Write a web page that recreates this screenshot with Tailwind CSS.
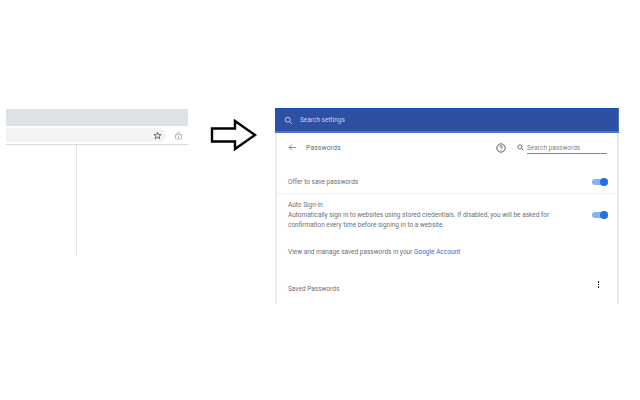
<!DOCTYPE html>
<html>
  <head>
    <meta charset="UTF-8" />
    <title>Passwords</title>
    <script src="https://cdn.jsdelivr.net/npm/@tailwindcss/browser@4"></script>
  </head>
  <body class="bg-white">
    <div class="w-[640px] h-[400px] flex items-start pt-[108px] overflow-hidden font-['Roboto',sans-serif] text-[6.5px] leading-[10px] text-[#6b6f74]">
      <!-- browser toolbar crop -->
      <div class="ml-[6px] w-[182px] mt-[1px] shrink-0">
        <div class="h-[17px] bg-[#dee1e6]"></div>
        <div class="h-[19px] pt-[2px] pb-[2px] flex items-center border-b border-[#d9d9d9]">
          <div class="w-[160px] h-[14px] bg-[#f1f3f4] rounded-r-full flex items-center justify-end pr-[4px]">
            <svg class="w-[9px] h-[9px]" viewBox="0 0 24 24" fill="#dcdee0" stroke="#55585d" stroke-width="2.200"><path d="M12 3l2.700 6.200 6.800.6-5.200 4.400 1.600 6.600L12 17.300l-5.900 3.500 1.600-6.600-5.200-4.400 6.800-.6z"/></svg>
          </div>
          <svg class="w-[9px] h-[9px] ml-[8px]" viewBox="0 0 24 24" fill="none" stroke="#9aa0a6" stroke-width="1.800"><path d="M4 10h16v11H4zM8 10V7a4 4 0 0 1 8 0v3"/><circle cx="12" cy="16" r="1.400" fill="#3c4043" stroke="none"/></svg>
        </div>
        <div class="ml-[70px] w-px h-[110px] bg-[#e3e3e3]"></div>
      </div>

      <svg class="ml-[22px] mt-[11px] w-[47px] h-[32px] shrink-0" viewBox="0 0 47 32" fill="none" stroke="#000" stroke-width="2.400"><path d="M2 9.500h23V2l20 14-20 14v-7.500H2z"/></svg>

      <!-- settings panel -->
      <div class="ml-[18px] w-[344px] h-[196px] shrink-0 flex flex-col">
        <div class="h-[25px] bg-[#2f4fa2] border-t border-t-[#0f4fc4] border-b-[2px] border-b-[#4a72dc] border-r border-r-[#3d73e0] flex items-center pl-[9px] text-[#c9d3ec]">
          <svg class="w-[9px] h-[9px]" viewBox="0 0 24 24" fill="none" stroke="#dfe5f5" stroke-width="2.200"><circle cx="10" cy="10" r="6.500"/><path d="M15 15l6 6"/></svg>
          <span class="ml-[7px]">Search settings</span>
        </div>
        <div class="flex-1 border-x-[2px] border-[#ebebeb] flex flex-col">
          <div class="h-[29px] flex items-center pl-[11px] pr-[10px]">
            <svg class="w-[9px] h-[9px]" viewBox="0 0 24 24" fill="none" stroke="#5f6368" stroke-width="2"><path d="M22 12H3M11 4l-8 8 8 8"/></svg>
            <span class="ml-[9px] text-[7px]">Passwords</span>
            <svg class="w-[10px] h-[10px] ml-auto" viewBox="0 0 24 24" fill="none" stroke="#3c4043" stroke-width="2"><circle cx="12" cy="12" r="10"/><path d="M9 9.500a3 3 0 1 1 4.500 2.600c-1 .6-1.500 1.200-1.500 2.400M12 16.500v2"/></svg>
            <svg class="w-[7px] h-[7px] ml-[11px]" viewBox="0 0 24 24" fill="none" stroke="#5f6368" stroke-width="3"><circle cx="10" cy="10" r="7"/><path d="M15 15l7 7"/></svg>
            <div class="ml-[3px] w-[80px] h-[13px] border-b border-[#80868b] flex items-center pt-[1px] text-[#80868b]">Search passwords</div>
          </div>
          <div class="mt-[8px] h-[24px] flex items-center justify-between px-[11px] pr-[9px] border-b border-[#f1f1f1]">
            <span>Offer to save passwords</span>
            <div class="relative w-[16px] h-[6px] rounded-full bg-[#8fb0ee]">
              <div class="absolute right-0 top-[-1px] w-[8px] h-[8px] rounded-full bg-[#1a73e8]"></div>
            </div>
          </div>
          <div class="mt-[6px] flex items-start justify-between pl-[11px] pr-[9px]">
            <div class="w-[276px]">
              <div>Auto Sign-in</div>
              <div>Automatically sign in to websites using stored credentials. If disabled, you will be asked for confirmation every time before signing in to a website.</div>
            </div>
            <div class="relative mt-[12px] w-[16px] h-[6px] rounded-full bg-[#8fb0ee]">
              <div class="absolute right-0 top-[-1px] w-[8px] h-[8px] rounded-full bg-[#1a73e8]"></div>
            </div>
          </div>
          <div class="mt-[17px] pl-[11px]">View and manage saved passwords in your <span class="text-[#3367d6]">Google Account</span></div>
          <div class="mt-[22px] flex items-start justify-between pl-[11px] pr-[18px]">
            <span class="mt-[5px]">Saved Passwords</span>
            <div class="mt-[2px] flex flex-col gap-[1px]">
              <div class="w-[1.500px] h-[1.500px] bg-[#202124]"></div>
              <div class="w-[1.500px] h-[1.500px] bg-[#202124]"></div>
              <div class="w-[1.500px] h-[1.500px] bg-[#202124]"></div>
            </div>
          </div>
        </div>
      </div>
    </div>
  </body>
</html>
